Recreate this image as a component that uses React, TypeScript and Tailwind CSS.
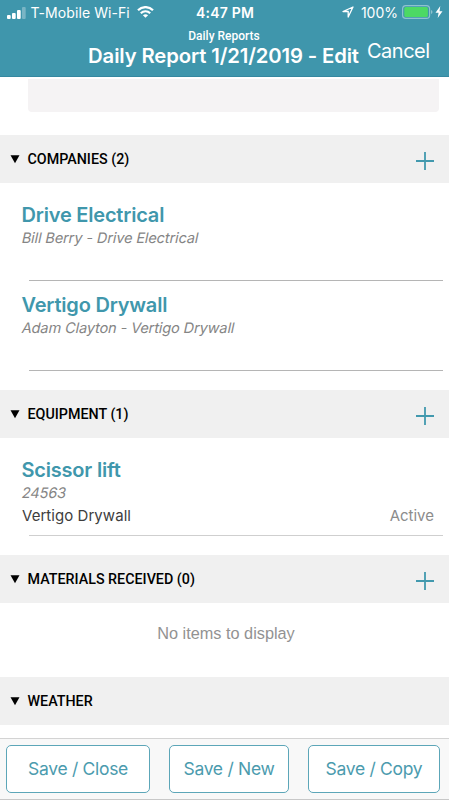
import React from "react";

function SectionHeader({ title, add = true }: { title: string; add?: boolean }) {
  return (
    <div className="flex h-12 shrink-0 items-center bg-[#f0f0f0] pl-[10px] pr-[15px] font-[Roboto,sans-serif]">
      <svg width="10" height="9" viewBox="0 0 10 9" className="mr-[7.5px]">
        <path d="M0.5 0.2H9.5L5 8.2Z" fill="#000" />
      </svg>
      <h2 className="flex-1 whitespace-nowrap text-[14.3px] font-medium leading-[18px] text-black">{title}</h2>
      {add && (
        <svg width="18" height="18" viewBox="0 0 18 18" className="mt-[3px]">
          <path d="M9 0V18M0 9H18" stroke="#4299ae" strokeWidth="1.8" />
        </svg>
      )}
    </div>
  );
}

function ItemTitle({ children }: { children: string }) {
  return <h3 className="ml-[21.5px] text-[20px] font-semibold leading-[26px] tracking-[-0.2px] text-[#4097ac]">{children}</h3>;
}

function Subtitle({ children }: { children: string }) {
  return <p className="ml-[22px] w-fit -skew-x-12 text-[14.5px] leading-5 tracking-[-0.1px] text-[#858585]">{children}</p>;
}

function Company({ name, contact }: { name: string; contact: string }) {
  return (
    <div className="h-[90px] shrink-0 pt-[12px]">
      <ItemTitle>{name}</ItemTitle>
      <Subtitle>{contact}</Subtitle>
      <div className="ml-[29px] mr-[6px] mt-[32px] h-px bg-[#b5b5b5]" />
    </div>
  );
}

function FooterButton({ label, size }: { label: string; size: string }) {
  return (
    <button className={"h-12 rounded-[5px] border-[1.5px] border-[#5ca6b8] bg-white text-[17.5px] tracking-[-0.3px] whitespace-nowrap text-[#4b9bae] " + size}>
      {label}
    </button>
  );
}

export default function App() {
  return (
    <div className="flex h-[800px] w-[449px] flex-col overflow-hidden bg-white font-[Inter,sans-serif]">
      <header className="h-[77px] shrink-0 border-b border-[#3588a0] bg-[#3f96ac] text-white">
        <div className="grid h-[26px] grid-cols-3 items-center pl-[7px] pr-[6px]">
          <div className="flex items-center">
            <svg width="19" height="12" viewBox="0 0 19 12" fill="#fff" className="shrink-0">
              <rect x="0" y="8" width="3.7" height="4" rx="1" />
              <rect x="5" y="6" width="3.7" height="6" rx="1" />
              <rect x="10" y="3" width="3.7" height="9" rx="1" />
              <rect x="15" y="0" width="3.7" height="12" rx="1" opacity=".3" />
            </svg>
            <span className="ml-[4.5px] mt-[-2px] whitespace-nowrap text-[14px] tracking-[0.08px]">T-Mobile Wi-Fi</span>
            <svg width="17" height="12" viewBox="0 0 17 12" className="ml-[7px] mt-[-2px] shrink-0" fill="none" stroke="#fff" strokeWidth="2.2">
              <path d="M1 4.3C5.2 0 11.8 0 16 4.3M3.8 7.2C6.5 4.6 10.5 4.6 13.2 7.2" />
              <path d="M8.5 11.8L5.9 9.2C7.4 7.9 9.6 7.9 11.1 9.2Z" fill="#fff" stroke="none" />
            </svg>
          </div>
          <span className="mt-[-2px] text-center text-[14px] font-semibold tracking-[0.2px]">4:47 PM</span>
          <div className="mt-[-2px] flex items-center justify-end">
            <svg width="12" height="12" viewBox="0 0 12 12" className="mr-[7px]" fill="none" stroke="#fff" strokeWidth="1.3" strokeLinejoin="round">
              <path d="M11 1L1 5.5H6.2V11Z" />
            </svg>
            <span className="text-[14px]">100%</span>
            <svg width="31" height="14" viewBox="0 0 31 14" className="ml-[4px]">
              <rect x=".6" y=".6" width="27" height="12.8" rx="3.2" fill="none" stroke="#8fc2ce" strokeWidth="1.2" />
              <rect x="2.3" y="2" width="23.6" height="10" rx="1.5" fill="#4cd964" />
              <path d="M29 5V9Q30.5 8.5 30.5 7T29 5" fill="#8fc2ce" />
            </svg>
            <svg width="8" height="12" viewBox="0 0 8 12" className="ml-[2px]">
              <path d="M5.3 0L0.5 6.7H3.6L2.7 12L7.5 5.2H4.5Z" fill="#fff" />
            </svg>
          </div>
        </div>
        <div className="flex">
          <div className="ml-[87px] w-[273px] shrink-0 text-center">
            <p className="mt-[2px] pl-px font-[Roboto,sans-serif] text-[12px] font-medium leading-4">Daily Reports</p>
            <h1 className="whitespace-nowrap text-[20.3px] font-semibold leading-6 tracking-[-0.13px]">Daily Report 1/21/2019 - Edit</h1>
          </div>
          <button className="ml-[7px] mt-[12px] h-[26px] text-[20px] leading-[26px] tracking-[-0.5px]">Cancel</button>
        </div>
      </header>

      <main className="flex min-h-0 flex-1 flex-col overflow-hidden">
        <div className="ml-[28px] mr-[10px] mt-[2px] h-[33px] shrink-0 rounded-b-[4px] bg-[#f5f3f4]" />
        <div className="h-[23px] shrink-0" />
        <SectionHeader title="COMPANIES (2)" />
        <div className="mt-[7px]">
          <Company name="Drive Electrical" contact="Bill Berry - Drive Electrical" />
          <Company name="Vertigo Drywall" contact="Adam Clayton - Vertigo Drywall" />
        </div>
        <div className="h-[20px] shrink-0" />
        <SectionHeader title="EQUIPMENT (1)" />
        <div className="h-[117px] shrink-0 pt-[19px]">
          <ItemTitle>Scissor lift</ItemTitle>
          <Subtitle>24563</Subtitle>
          <div className="ml-[22px] mr-[15px] mt-[1px] flex justify-between text-[15px] leading-6">
            <span className="tracking-[0.05px] text-[#3d3d3d]">Vertigo Drywall</span>
            <span className="text-[#8c8c8c]">Active</span>
          </div>
          <div className="ml-[29px] mr-[6px] mt-[7px] h-px bg-[#cfcfcf]" />
        </div>
        <SectionHeader title="MATERIALS RECEIVED (0)" />
        <p className="h-[74px] shrink-0 pl-[3px] pt-[20px] text-center text-[16.3px] font-light leading-5 text-[#929292] font-['Liberation_Sans',sans-serif]">
          No items to display
        </p>
        <SectionHeader title="WEATHER" add={false} />
      </main>

      <footer className="flex h-[62px] shrink-0 justify-between border-y border-t-[#d3d3d3] border-b-[#c8c8c8] bg-[#f8f8f8] pl-[6px] pr-[9px] pt-[6px]">
        <FooterButton label="Save / Close" size="w-[144px]" />
        <FooterButton label="Save / New" size="w-[120px]" />
        <FooterButton label="Save / Copy" size="w-[132px]" />
      </footer>
    </div>
  );
}
